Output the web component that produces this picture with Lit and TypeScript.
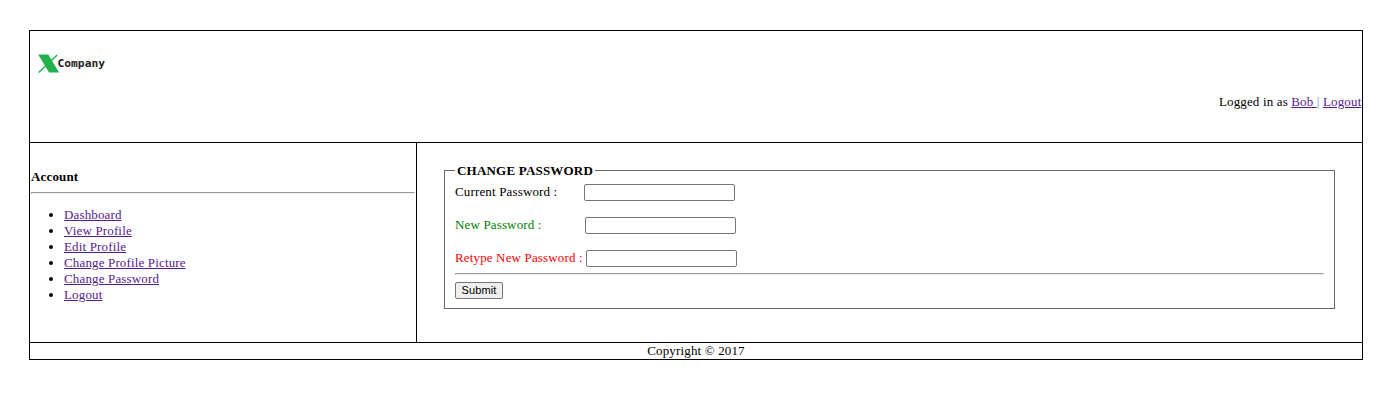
import { LitElement, html, css } from "lit";
import { customElement } from "lit/decorators.js";

const LINKS = ["Dashboard", "View Profile", "Edit Profile", "Change Profile Picture", "Change Password", "Logout"];
const FIELDS = [
  { label: "Current Password :", tone: "current" },
  { label: "New Password :", tone: "fresh" },
  { label: "Retype New Password :", tone: "retype" },
];

@customElement("app-root")
export class AppRoot extends LitElement {
  static styles = css`
    :host { display: block; padding: 30px 29px 0; height: 402px; box-sizing: border-box; background: #fff; color: #000; font: 13px/16px "Liberation Serif", "Times New Roman", serif; letter-spacing: 0.15px; }
    * { box-sizing: border-box; }
    a { color: #551a8b; text-decoration: underline; }
    .frame { display: grid; grid-template-rows: 112px 200px 16px; width: 1334px; height: 330px; border: 1px solid #000; }
    .top { border-bottom: 1px solid #000; padding: 23px 0 0 8px; display: flex; flex-direction: column; }
    .logo { display: block; width: 70px; height: 20px; letter-spacing: 0; }
    .user { text-align: right; margin-top: 20px; padding-right: 0.6px; }
    .bar { color: #7d7bc2; }
    .main { display: grid; grid-template-columns: 387px 1fr; border-bottom: 1px solid #000; }
    .side { border-right: 1px solid #000; padding: 26px 1px 0; }
    .title { margin: 0; font-weight: bold; font-size: 13px; line-height: 16px; }
    .rule { margin: 0; height: 2px; border: 1px solid; border-color: #9a9a9a #eee #eee #9a9a9a; }
    .side .rule { margin-top: 7px; }
    .list { margin: 13px 0 0; padding: 0 0 0 33px; }
    .content { padding: 20px 27px 0; }
    .box { margin: 0; padding: 6px 10px 9px; border: 1px solid #696969; height: 146px; min-width: 0; }
    .legend { padding: 0 2px; font-weight: bold; height: 15px; letter-spacing: 0.2px; }
    .row { display: flex; height: 17px; margin-bottom: 16px; }
    .row:nth-of-type(3) { margin-bottom: 6px; }
    .label { width: 129px; white-space: nowrap; }
    .fresh { color: green; width: 130px; }
    .retype { color: red; width: 131px; }
    .input { width: 151px; height: 17px; margin: 0; padding: 1px 2px; border: 1px solid #767676; border-radius: 2px; background: #fff; outline: none; }
    .submit { display: block; margin: 7px 0 0; width: 48px; height: 17px; padding: 0; border: 1px solid #767676; border-radius: 2px; background: #efefef; color: #000; font: 11px/13px "Liberation Sans", Arial, sans-serif; letter-spacing: 0.15px; }
    .foot { text-align: center; line-height: 16px; }
  `;

  render() {
    return html`
      <div class="frame">
        <header class="top">
          <svg class="logo" viewBox="0 0 70 20">
            <path d="M0.7 18.6 L19.2 1" stroke="#22b14c" stroke-width="1.4" />
            <path d="M0.2 0.6 H10.3 L21 18.6 H11 Z" fill="#22b14c" />
            <text x="19.5" y="13.2" font-family="DejaVu Sans Mono, monospace" font-weight="bold" font-size="11" textLength="47.5" lengthAdjust="spacingAndGlyphs" fill="#222">Company</text>
          </svg>
          <div class="user">Logged in as <a href="#">Bob </a><span class="bar">|</span> <a href="#">Logout</a></div>
        </header>
        <div class="main">
          <nav class="side">
            <h4 class="title">Account</h4>
            <hr class="rule" />
            <ul class="list">${LINKS.map((l) => html`<li><a href="#">${l}</a></li>`)}</ul>
          </nav>
          <section class="content">
            <fieldset class="box">
              <legend class="legend">CHANGE PASSWORD</legend>
              ${FIELDS.map((f) => html`<div class="row"><label class="label ${f.tone}">${f.label}</label><input class="input" type="password" /></div>`)}
              <hr class="rule" />
              <button class="submit" type="button">Submit</button>
            </fieldset>
          </section>
        </div>
        <footer class="foot">Copyright © 2017</footer>
      </div>
    `;
  }
}
